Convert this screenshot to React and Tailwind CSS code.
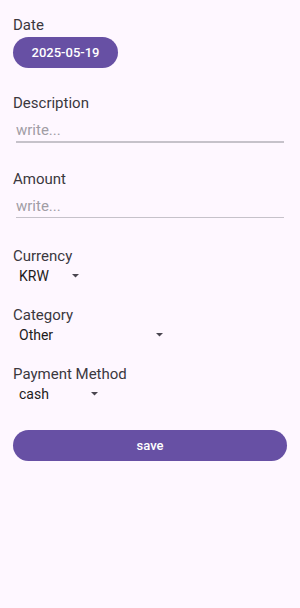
import { useState } from "react";

const Label = ({ children }) => (
    <div className="text-[15px] leading-5 text-[#3b383e]">{children}</div>
);

const Caret = () => (
    <svg width="7" height="4" viewBox="0 0 7 4" className="shrink-0">
        <polygon points="0,0 7,0 3.5,3.6" fill="#4a4650" />
    </svg>
);

const Dropdown = ({ value, textWidth }) => (
    <div className="flex items-center pl-[6px] h-5">
        <span className={`text-[14px] leading-5 text-[#1d1b20] ${textWidth}`}>{value}</span>
        <Caret />
    </div>
);

const TextInput = ({ value, onChange }) => (
    <div className="mx-[3px] pt-[7px]">
        <input
            type="text"
            placeholder="write..."
            value={value}
            onChange={(e) => onChange(e.target.value)}
            className="w-full bg-transparent text-[15px] leading-5 h-5 text-[#1d1b20] placeholder:text-[#a19da5] outline-none p-0 block"
        />
        <div className="mt-[1px] h-[1.5px] bg-[#c6c2ca]" />
    </div>
);

const App = () => {

    const [description, setDescription] = useState("");
    const [amount, setAmount] = useState("");

    return (
        <div
            className="min-h-[608px] w-[300px] bg-[#fef7ff] px-[13px] pt-[15px]"
            style={{ fontFamily: "Roboto, 'Noto Sans', sans-serif" }}
        >

            {/* Date */}
            <Label>Date</Label>
            <button className="mt-[2px] h-[31px] w-[105px] rounded-full bg-[#6750a4] text-[13px] font-medium text-white">
                2025-05-19
            </button>

            {/* Description */}
            <div className="mt-[25px]">
                <Label>Description</Label>
                <TextInput value={description} onChange={setDescription} />
            </div>

            {/* Amount */}
            <div className="mt-[26px]">
                <Label>Amount</Label>
                <TextInput value={amount} onChange={setAmount} />
            </div>

            {/* Currency */}
            <div className="mt-[28px]">
                <Label>Currency</Label>
                <Dropdown value="KRW" textWidth="w-[53px]" />
            </div>

            {/* Category */}
            <div className="mt-[19px]">
                <Label>Category</Label>
                <Dropdown value="Other" textWidth="w-[137px]" />
            </div>

            {/* Payment Method */}
            <div className="mt-[19px]">
                <Label>Payment Method</Label>
                <Dropdown value="cash" textWidth="w-[72px]" />
            </div>

            <button className="mt-[26px] h-[31px] w-full rounded-full bg-[#6750a4] text-[13px] font-medium text-white">
                save
            </button>

        </div>
    );
};

export default App;
